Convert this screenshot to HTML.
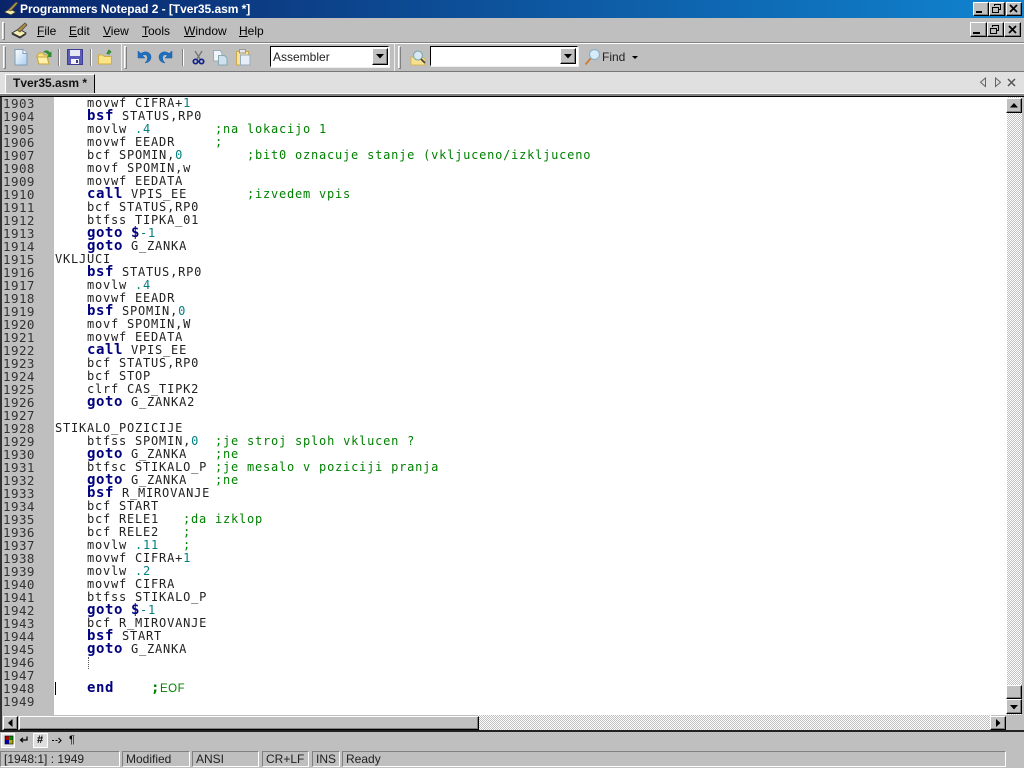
<!DOCTYPE html>
<html><head><meta charset="utf-8"><title>Programmers Notepad 2</title>
<style>
html,body{margin:0;padding:0;background:#bfbfbf;overflow:hidden;}
#a{position:relative;width:1024px;height:768px;overflow:hidden;background:#bfbfbf;font-family:"Liberation Sans",sans-serif;font-size:12px;color:#000;}
.p{position:absolute;}
.t{position:absolute;white-space:pre;line-height:14px;}
u{text-decoration:underline;}
svg{position:absolute;overflow:visible;}
.b{position:absolute;box-sizing:border-box;background:#c0c0c0;border:1px solid;border-color:#fff #000 #000 #fff;box-shadow:inset -1px -1px 0 #808080;}
.grip{position:absolute;width:3px;box-sizing:border-box;border:1px solid;border-color:#fff #808080 #808080 #fff;background:#d4d4d4;}
.sep{position:absolute;width:2px;border-left:1px solid #808080;border-right:1px solid #fff;box-sizing:border-box;}
.chk{position:absolute;background-color:#fff;background-image:conic-gradient(#c0c0c0 25%,#fff 0 50%,#c0c0c0 0 75%,#fff 0);background-size:2px 2px;}
.st{position:absolute;top:751px;height:16px;box-sizing:border-box;border:1px solid;border-color:#808080 #fff #fff #808080;line-height:15px;padding-left:3px;white-space:pre;font-size:12px;color:#222;}
#ed{position:absolute;left:55px;top:97px;width:952px;font-family:"DejaVu Sans Mono",monospace;font-size:12px;letter-spacing:.78px;line-height:13px;color:#222;}
#ed div{height:13px;position:relative;white-space:pre;}
#ed b{color:#000080;font-size:14px;letter-spacing:.57px;line-height:13px;}
#ed .n{color:#007f7f;}
#ed .c{color:#008000;position:absolute;top:0;}
#ln{position:absolute;left:3px;top:97px;font-family:"DejaVu Sans Mono",monospace;font-size:12.5px;letter-spacing:.45px;line-height:13px;color:#333;white-space:pre;}
</style></head><body><div id="a">

<!-- title bar -->
<div class="p" style="left:0;top:0;width:1024px;height:18px;background:linear-gradient(90deg,#0a246a,#1084d0);"></div>
<svg style="left:3px;top:1px" width="16" height="16" viewBox="0 0 16 16"><path d="M1 11 L7 8 L13 11 L8 14Z" fill="#f4eeb0" stroke="#333" stroke-width=".8"/><path d="M5 9 L13 1 L15 2 L8 10Z" fill="#b09040" stroke="#444" stroke-width=".6"/></svg>
<div class="t" style="left:20px;top:1px;color:#fff;font-weight:bold;font-size:12px;line-height:16px;letter-spacing:-.05px;">Programmers Notepad 2 - [Tver35.asm *]</div>
<div class="b" style="left:973px;top:2px;width:16px;height:14px;"></div><div class="p" style="left:976px;top:11px;width:6px;height:2px;background:#000;"></div>
<div class="b" style="left:989px;top:2px;width:16px;height:14px;"></div><svg style="left:991px;top:3px" width="12" height="11"><path d="M3.5 3V1.5H9.5V6.5H7.5M1.5 4.5H7.5V9.5H1.5Z" fill="none" stroke="#000"/></svg>
<div class="b" style="left:1006px;top:2px;width:16px;height:14px;"></div><svg style="left:1009px;top:4px" width="10" height="10"><path d="M1 1L8 8M8 1L1 8" stroke="#000" stroke-width="1.7"/></svg>

<!-- menu bar -->
<div class="p" style="left:0;top:18px;width:1024px;height:24px;background:#bfbfbf;"></div>
<div class="grip" style="left:2px;top:22px;height:18px;"></div>
<svg style="left:11px;top:22px" width="18" height="17" viewBox="0 0 18 17"><path d="M1 11 L8 7 L15 11 L9 15Z" fill="#f6efb0" stroke="#333"/><path d="M1 12 L9 16 L15 12" fill="none" stroke="#333"/><path d="M6 8 L14 1 L16 3 L9 10Z" fill="#a88a3c" stroke="#444" stroke-width=".7"/></svg>
<div class="t" style="left:37px;top:24px;"><u>F</u>ile</div>
<div class="t" style="left:69px;top:24px;"><u>E</u>dit</div>
<div class="t" style="left:103px;top:24px;"><u>V</u>iew</div>
<div class="t" style="left:142px;top:24px;"><u>T</u>ools</div>
<div class="t" style="left:184px;top:24px;"><u>W</u>indow</div>
<div class="t" style="left:239px;top:24px;"><u>H</u>elp</div>
<div class="b" style="left:970px;top:22px;width:17px;height:15px;"></div><div class="p" style="left:973px;top:32px;width:7px;height:2px;background:#000;"></div>
<div class="b" style="left:987px;top:22px;width:17px;height:15px;"></div><svg style="left:989px;top:24px" width="12" height="11"><path d="M3.5 3V1.5H9.5V6.5H7.5M1.5 4.5H7.5V9.5H1.5Z" fill="none" stroke="#000"/></svg>
<div class="b" style="left:1004px;top:22px;width:17px;height:15px;"></div><svg style="left:1008px;top:25px" width="10" height="10"><path d="M1 1L8 8M8 1L1 8" stroke="#000" stroke-width="1.7"/></svg>

<!-- toolbar -->
<div class="p" style="left:0;top:42px;width:1024px;height:1px;background:#808080;"></div>
<div class="p" style="left:0;top:43px;width:1024px;height:1px;background:#fff;"></div>
<div class="p" style="left:0;top:44px;width:1024px;height:27px;background:#bfbfbf;"></div>
<div class="p" style="left:0;top:71px;width:1024px;height:1px;background:#777;"></div>
<div class="grip" style="left:3px;top:46px;height:23px;"></div>
<div class="grip" style="left:124px;top:46px;height:23px;"></div>
<div class="grip" style="left:398px;top:46px;height:23px;"></div>
<div class="p" style="left:121px;top:44px;width:1px;height:27px;background:#eee;"></div>
<div class="p" style="left:394px;top:44px;width:1px;height:27px;background:#eee;"></div>
<div class="sep" style="left:58px;top:49px;height:17px;"></div>
<div class="sep" style="left:90px;top:49px;height:17px;"></div>
<div class="sep" style="left:182px;top:49px;height:17px;"></div>

<svg style="left:14px;top:49px" width="14" height="17"><defs><linearGradient id="g1" x1="0" y1="0" x2="1" y2="1"><stop offset="0" stop-color="#fff"/><stop offset="1" stop-color="#a8cdf0"/></linearGradient></defs><path d="M1 .5H9L13 4.5V16H1Z" fill="url(#g1)" stroke="#7f9db9"/><path d="M9 .5V4.5H13" fill="#fff" stroke="#7f9db9"/></svg>
<svg style="left:36px;top:49px" width="16" height="17"><path d="M1 7L3 4H7L8 6H12V15H3Z" fill="#f7e28a" stroke="#c9a53a"/><path d="M1 8H11L13 15H3Z" fill="#fdf0a8" stroke="#c9a53a"/><path d="M7 3C10 .5 12 1 14 3.5L15.5 2.5V8H11L12.5 6C11 4 9.5 3.5 7 3Z" fill="#2f8f2f"/></svg>
<svg style="left:67px;top:49px" width="16" height="16"><path d="M.5.5H15.5V15.5H.5Z" fill="#5a5ab8" stroke="#3d3d90"/><path d="M3 1H13V7H3Z" fill="#e8e8f4"/><path d="M4 10H12V15H4Z" fill="#f4f4fa"/><path d="M9 11H11V14H9Z" fill="#3d3d90"/></svg>
<svg style="left:98px;top:49px" width="15" height="16"><path d="M.5 6H5L6.5 7.5H13.5V15H.5Z" fill="#fbe487" stroke="#cfae45"/><path d="M9 5L11 1.5L13 3.5M11 1.5V5.5" fill="none" stroke="#2f8f2f" stroke-width="1.6"/></svg>
<svg style="left:136px;top:50px" width="16" height="15" viewBox="0 0 16 15"><path d="M2 1V8H9L6.5 5.5C8.5 4 11.5 4.5 11.5 8C11.5 10 10.5 11.5 9 13C13 12.5 15 10 15 7C15 2.5 9.5 0 5 3.5Z" fill="#1f6fc0" stroke="#1a5aa0" stroke-width=".5"/></svg>
<svg style="left:158px;top:50px" width="16" height="15" viewBox="0 0 16 15"><path d="M14 1V8H7L9.5 5.5C7.5 4 4.5 4.5 4.5 8C4.5 10 5.5 11.5 7 13C3 12.5 1 10 1 7C1 2.5 6.5 0 11 3.5Z" fill="#1f6fc0" stroke="#1a5aa0" stroke-width=".5"/></svg>
<svg style="left:192px;top:50px" width="13" height="15"><path d="M3 1L8 9M10 1L5 9" stroke="#777" stroke-width="1.4"/><circle cx="3.5" cy="11.5" r="2.2" fill="none" stroke="#10208a" stroke-width="1.7"/><circle cx="9.5" cy="11.5" r="2.2" fill="none" stroke="#10208a" stroke-width="1.7"/></svg>
<svg style="left:213px;top:50px" width="15" height="16"><path d="M.5.5H7L9 3V11H.5Z" fill="#f0f5fb" stroke="#9ab"/><path d="M5.5 5.5H11.5L14 8V15H5.5Z" fill="#cfe0f2" stroke="#8aa"/></svg>
<svg style="left:236px;top:49px" width="15" height="17"><path d="M.5 2.5H12.5V16H.5Z" fill="#f9e39a" stroke="#c9a84a"/><path d="M3.5.5H9.5V4H3.5Z" fill="#e8e8e8" stroke="#999"/><path d="M4.5 6H14V16H4.5Z" fill="#e6eef8" stroke="#9ab"/></svg>

<!-- combo 1 -->
<div class="p" style="left:270px;top:46px;width:119px;height:21px;box-sizing:border-box;background:#fff;border:1px solid;border-color:#000 #fff #fff #000;box-shadow:1px 1px 0 #eee;"></div>
<div class="t" style="left:273px;top:50px;color:#222;">Assembler</div>
<div class="b" style="left:372px;top:48px;width:16px;height:17px;"></div>
<svg style="left:376px;top:54px" width="8" height="5"><path d="M0 0H8L4 4.5Z" fill="#000"/></svg>
<svg style="left:410px;top:49px" width="17" height="17"><path d="M1 8H12L15 10V16H1Z" fill="#f8e08c" stroke="#d0b040" stroke-width=".7"/><circle cx="8" cy="6.5" r="4.5" fill="#d8e8f4" stroke="#8aa" stroke-width="1.2"/><path d="M11 10L15 14" stroke="#444" stroke-width="1.6"/></svg>
<!-- combo 2 -->
<div class="p" style="left:430px;top:46px;width:148px;height:20px;box-sizing:border-box;background:#fff;border:1px solid;border-color:#000 #fff #fff #000;box-shadow:1px 1px 0 #eee;"></div>
<div class="b" style="left:560px;top:48px;width:16px;height:16px;"></div>
<svg style="left:564px;top:54px" width="8" height="5"><path d="M0 0H8L4 4.5Z" fill="#000"/></svg>
<svg style="left:584px;top:48px" width="17" height="18"><path d="M1.5 16.5L7 10" stroke="#c8803a" stroke-width="2"/><circle cx="10.5" cy="6.5" r="5" fill="#d6ecfa" stroke="#8fb0c8" stroke-width="1.2"/></svg>
<div class="t" style="left:602px;top:50px;color:#222;">Find</div>
<svg style="left:632px;top:56px" width="7" height="4"><path d="M0 0H6L3 3Z" fill="#000"/></svg>

<!-- tab bar -->
<div class="p" style="left:0;top:72px;width:1024px;height:21px;background:#e0e0e0;"></div>
<div class="p" style="left:0;top:93px;width:1024px;height:1px;background:#f8f8f8;"></div>
<div class="p" style="left:0;top:94px;width:1024px;height:2px;background:#808080;"></div>
<div class="p" style="left:0;top:96px;width:1024px;height:1px;background:#000;"></div>
<div class="p" style="left:5px;top:74px;width:90px;height:19px;box-sizing:border-box;background:#c0c0c0;border-left:1px solid #fff;border-top:1px solid #fff;border-right:1px solid #000;"></div>
<div class="t" style="left:13px;top:76px;font-weight:bold;color:#111;">Tver35.asm *</div>
<svg style="left:979px;top:77px" width="8" height="11"><path d="M6.5 1V9.5L1.5 5.2Z" fill="none" stroke="#666"/></svg>
<svg style="left:994px;top:77px" width="8" height="11"><path d="M1.5 1V9.5L6.5 5.2Z" fill="none" stroke="#666"/></svg>
<svg style="left:1007px;top:78px" width="10" height="10"><path d="M1 1L8 8M8 1L1 8" stroke="#555" stroke-width="1.5"/></svg>

<!-- editor -->
<div class="p" style="left:0;top:97px;width:2px;height:634px;background:#333;"></div>
<div class="p" style="left:2px;top:97px;width:52px;height:618px;background:#bfbfbf;"></div>
<div class="p" style="left:54px;top:97px;width:953px;height:618px;background:#fff;"></div>
<div id="ln">1903
1904
1905
1906
1907
1908
1909
1910
1911
1912
1913
1914
1915
1916
1917
1918
1919
1920
1921
1922
1923
1924
1925
1926
1927
1928
1929
1930
1931
1932
1933
1934
1935
1936
1937
1938
1939
1940
1941
1942
1943
1944
1945
1946
1947
1948
1949</div>
<div id="ed"><div>    movwf CIFRA+<span class="n">1</span></div>
<div>    <b>bsf</b> STATUS,RP0</div>
<div>    movlw <span class="n">.4</span><span class="c" style="left:160px">;na lokacijo 1</span></div>
<div>    movwf EEADR<span class="c" style="left:160px">;</span></div>
<div>    bcf SPOMIN,<span class="n">0</span><span class="c" style="left:192px">;bit0 oznacuje stanje (vkljuceno/izkljuceno</span></div>
<div>    movf SPOMIN,w</div>
<div>    movwf EEDATA</div>
<div>    <b>call</b> VPIS_EE<span class="c" style="left:192px">;izvedem vpis</span></div>
<div>    bcf STATUS,RP0</div>
<div>    btfss TIPKA_01</div>
<div>    <b>goto</b> <b>$</b><span class="n">-1</span></div>
<div>    <b>goto</b> G_ZANKA</div>
<div>VKLJUCI</div>
<div>    <b>bsf</b> STATUS,RP0</div>
<div>    movlw <span class="n">.4</span></div>
<div>    movwf EEADR</div>
<div>    <b>bsf</b> SPOMIN,<span class="n">0</span></div>
<div>    movf SPOMIN,W</div>
<div>    movwf EEDATA</div>
<div>    <b>call</b> VPIS_EE</div>
<div>    bcf STATUS,RP0</div>
<div>    bcf STOP</div>
<div>    clrf CAS_TIPK2</div>
<div>    <b>goto</b> G_ZANKA2</div>
<div> </div>
<div>STIKALO_POZICIJE</div>
<div>    btfss SPOMIN,<span class="n">0</span><span class="c" style="left:160px">;je stroj sploh vklucen ?</span></div>
<div>    <b>goto</b> G_ZANKA<span class="c" style="left:160px">;ne</span></div>
<div>    btfsc STIKALO_P<span class="c" style="left:160px">;je mesalo v poziciji pranja</span></div>
<div>    <b>goto</b> G_ZANKA<span class="c" style="left:160px">;ne</span></div>
<div>    <b>bsf</b> R_MIROVANJE</div>
<div>    bcf START</div>
<div>    bcf RELE1<span class="c" style="left:128px">;da izklop</span></div>
<div>    bcf RELE2<span class="c" style="left:128px">;</span></div>
<div>    movlw <span class="n">.11</span><span class="c" style="left:128px">;</span></div>
<div>    movwf CIFRA+<span class="n">1</span></div>
<div>    movlw <span class="n">.2</span></div>
<div>    movwf CIFRA</div>
<div>    btfss STIKALO_P</div>
<div>    <b>goto</b> <b>$</b><span class="n">-1</span></div>
<div>    bcf R_MIROVANJE</div>
<div>    <b>bsf</b> START</div>
<div>    <b>goto</b> G_ZANKA</div>
<div> </div>
<div> </div>
<div>    <b>end</b><span class="c" style="left:96px"><b style="color:#008000">;</b><span style="font-family:'Liberation Sans',sans-serif;font-size:11.5px;letter-spacing:.5px">EOF</span></span></div>
<div> </div></div>
<div class="p" style="left:88px;top:657px;height:12px;border-left:1px dotted #555;"></div>
<div class="p" style="left:55px;top:682px;width:1px;height:13px;background:#000;"></div>

<!-- vertical scrollbar -->
<div class="chk" style="left:1007px;top:97px;width:15px;height:618px;"></div>
<div class="b" style="left:1006px;top:98px;width:16px;height:15px;"></div>
<svg style="left:1010px;top:103px" width="8" height="5"><path d="M4 0L8 4.5H0Z" fill="#000"/></svg>
<div class="b" style="left:1006px;top:685px;width:16px;height:14px;"></div>
<div class="b" style="left:1006px;top:699px;width:16px;height:15px;"></div>
<svg style="left:1010px;top:705px" width="8" height="5"><path d="M0 0H8L4 4.5Z" fill="#000"/></svg>
<!-- horizontal scrollbar -->
<div class="chk" style="left:478px;top:715px;width:513px;height:15px;"></div>
<div class="b" style="left:3px;top:716px;width:15px;height:14px;"></div>
<svg style="left:8px;top:719px" width="5" height="8"><path d="M4.5 0V8L0 4Z" fill="#000"/></svg>
<div class="b" style="left:19px;top:716px;width:460px;height:14px;"></div>
<div class="b" style="left:990px;top:716px;width:16px;height:14px;"></div>
<svg style="left:996px;top:719px" width="5" height="8"><path d="M0 0V8L4.5 4Z" fill="#000"/></svg>
<div class="p" style="left:0;top:730px;width:1024px;height:2px;background:#222;"></div>

<!-- bottom toolbar -->
<div class="p" style="left:1px;top:733px;width:14px;height:15px;background:#e6e6e6;border:1px solid #fff;box-sizing:border-box;"></div>
<svg style="left:5px;top:736px" width="8" height="9"><rect width="4" height="4" fill="#a00"/><rect x="4" width="4" height="4" fill="#080"/><rect y="4" width="4" height="4" fill="#00a"/><rect x="4" y="4" width="4" height="4" fill="#aa0"/><rect x=".0" y="0" width="8" height="8" fill="none" stroke="#000" stroke-width=".6"/></svg>
<svg style="left:19px;top:735px" width="10" height="10"><path d="M8 1.5V5H2M4 2.8L1.5 5L4 7.2" fill="none" stroke="#000" stroke-width="1.2"/></svg>
<div class="p" style="left:33px;top:733px;width:15px;height:15px;background:#dedede;border:1px solid #fff;box-sizing:border-box;"></div>
<div class="t" style="left:37px;top:733px;font-weight:bold;font-size:11px;">#</div>
<svg style="left:52px;top:736px" width="10" height="9"><path d="M0 4.5H2M3.5 4.5H5.5M6.5 2L9 4.5L6.5 7" fill="none" stroke="#000" stroke-width="1.1"/></svg>
<div class="t" style="left:69px;top:733px;font-size:11px;">¶</div>

<!-- status bar -->
<div class="st" style="left:0;width:120px;">[1948:1] : 1949</div>
<div class="st" style="left:122px;width:68px;">Modified</div>
<div class="st" style="left:192px;width:67px;">ANSI</div>
<div class="st" style="left:262px;width:47px;">CR+LF</div>
<div class="st" style="left:312px;width:28px;">INS</div>
<div class="st" style="left:342px;width:664px;">Ready</div>
</div></body></html>
